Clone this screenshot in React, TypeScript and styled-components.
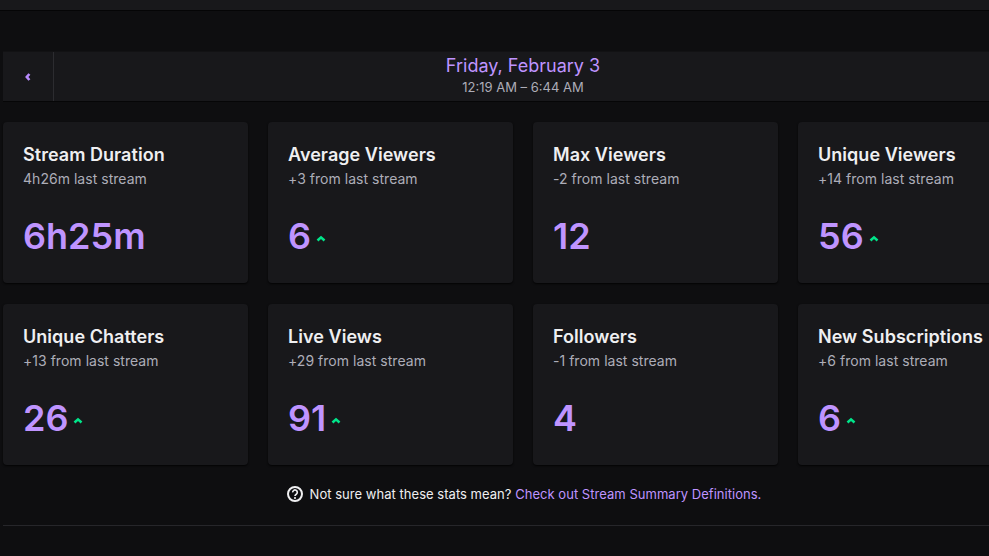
import React from "react";
import styled, { createGlobalStyle } from "styled-components";

const Global = createGlobalStyle`
  html, body { margin: 0; padding: 0; background: #0e0e10; }
  body { font-family: Inter, "Liberation Sans", sans-serif; overflow: hidden; }
`;

const Page = styled.div`
  width: 989px;
  height: 556px;
  overflow: hidden;
  background: #0e0e10;
`;

const TopBar = styled.div`
  height: 10px;
  background: #18181b;
  border-bottom: 1px solid #050506;
`;

const Content = styled.main`
  width: 990px;
  margin-left: 3px;
  padding-top: 40px;
`;

const DateBar = styled.header`
  display: flex;
  box-sizing: border-box;
  height: 51px;
  background: #18181b;
  border-top: 1px solid #121214;
  border-bottom: 1px solid #060607;
`;

const BackButton = styled.button`
  width: 51px;
  flex: none;
  padding: 0;
  border: 0;
  border-right: 1px solid #2c2c30;
  background: transparent;
  display: flex;
  align-items: center;
  justify-content: center;
`;

const DateText = styled.div`
  flex: 1;
  display: flex;
  flex-direction: column;
  align-items: center;
  padding: 2px 1px 0 0;
`;

const DateTitle = styled.div`
  color: #bf94ff;
  font-size: 18px;
  line-height: 24px;
`;

const TimeRange = styled.div`
  color: #adadb8;
  font-size: 13px;
  line-height: 18px;
`;

const Grid = styled.section`
  display: grid;
  grid-template-columns: repeat(4, 245px);
  grid-auto-rows: 161px;
  gap: 21px 20px;
  margin-top: 20px;
`;

const Card = styled.article`
  box-sizing: border-box;
  padding: 21px 20px 0;
  background: #18181b;
  border-radius: 4px;
  box-shadow: 0 1px 2px rgba(0, 0, 0, 0.8);
`;

const CardTitle = styled.h3`
  margin: 0;
  color: #efeff1;
  font-size: 18px;
  font-weight: 600;
  line-height: 24px;
  letter-spacing: 0.04px;
  white-space: nowrap;
`;

const CardSub = styled.div`
  color: #adadb8;
  font-size: 14px;
  line-height: 20px;
  letter-spacing: 0.03px;
  margin-top: 2px;
  white-space: nowrap;
`;

const ValueRow = styled.div`
  display: flex;
  align-items: center;
  gap: 5px;
  margin-top: 25px;
`;

const Value = styled.span`
  color: #bf94ff;
  font-size: 36px;
  font-weight: 600;
  line-height: 44px;
`;

const Arrow = styled.svg`
  margin-top: 5px;
`;

const Note = styled.p`
  display: flex;
  align-items: center;
  justify-content: center;
  gap: 7px;
  width: 1042px;
  margin: 20px 0 0;
  color: #efeff1;
  font-size: 13px;
  line-height: 18px;
  letter-spacing: 0.03px;
`;

const NoteLink = styled.a`
  color: #bf94ff;
  text-decoration: none;
`;

const Divider = styled.hr`
  margin: 22px 0 0;
  border: 0;
  border-top: 1px solid #26262a;
`;

const stats = [
  { title: "Stream Duration", sub: "4h26m last stream", value: "6h25m", up: false },
  { title: "Average Viewers", sub: "+3 from last stream", value: "6", up: true },
  { title: "Max Viewers", sub: "-2 from last stream", value: "12", up: false },
  { title: "Unique Viewers", sub: "+14 from last stream", value: "56", up: true },
  { title: "Unique Chatters", sub: "+13 from last stream", value: "26", up: true },
  { title: "Live Views", sub: "+29 from last stream", value: "91", up: true },
  { title: "Followers", sub: "-1 from last stream", value: "4", up: false },
  { title: "New Subscriptions", sub: "+6 from last stream", value: "6", up: true },
];

export default function App() {
  return (
    <Page>
      <Global />
      <TopBar />
      <Content>
        <DateBar>
          <BackButton aria-label="Previous stream">
            <svg width="6" height="8" viewBox="0 0 6 8">
              <path d="M4.4 1 1.8 4l2.6 3" fill="none" stroke="#b98bff" strokeWidth="2.6" />
            </svg>
          </BackButton>
          <DateText>
            <DateTitle>Friday, February 3</DateTitle>
            <TimeRange>12:19 AM – 6:44 AM</TimeRange>
          </DateText>
        </DateBar>
        <Grid>
          {stats.map((s) => (
            <Card key={s.title}>
              <CardTitle>{s.title}</CardTitle>
              <CardSub>{s.sub}</CardSub>
              <ValueRow>
                <Value>{s.value}</Value>
                {s.up && (
                  <Arrow width="10" height="7" viewBox="0 0 10 7">
                    <path d="M1.5 5.5 5 2.4l3.5 3.1" fill="none" stroke="#00e58a" strokeWidth="2.6" />
                  </Arrow>
                )}
              </ValueRow>
            </Card>
          ))}
        </Grid>
        <Note>
          <svg width="16" height="16" viewBox="0 0 16 16">
            <circle cx="8" cy="8" r="7" fill="none" stroke="#efeff1" strokeWidth="2" />
            <path d="M5.7 6.4a2.3 2.3 0 1 1 3.6 1.8c-.9.6-1.3 1-1.3 1.7" fill="none" stroke="#efeff1" strokeWidth="1.7" />
            <circle cx="8" cy="12" r="1.05" fill="#efeff1" />
          </svg>
          <span>
            Not sure what these stats mean? <NoteLink href="#">Check out Stream Summary Definitions.</NoteLink>
          </span>
        </Note>
        <Divider />
      </Content>
    </Page>
  );
}
